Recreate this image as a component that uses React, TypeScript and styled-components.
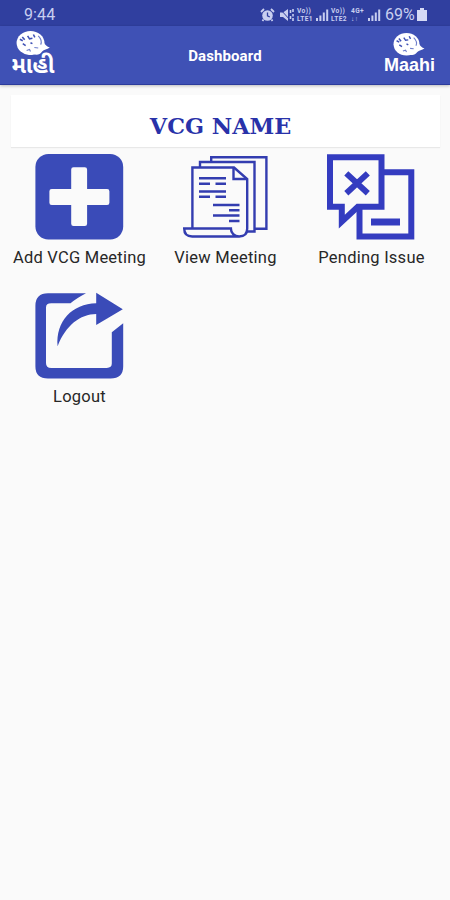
import React from 'react';
import styled, { createGlobalStyle } from 'styled-components';

const GlobalStyle = createGlobalStyle`
  * { box-sizing: border-box; }
  html, body { margin: 0; background: #fafafa; }
  body { font-family: Roboto, sans-serif; }
`;

const Screen = styled.div`
  display: flex;
  flex-direction: column;
  width: 450px;
  height: 900px;
  overflow: hidden;
  background: #fafafa;
`;

const StatusBar = styled.div`
  display: flex;
  justify-content: space-between;
  align-items: center;
  height: 26px;
  padding: 3px 23px 0 24px;
  background: #303f9f;
  color: #c9cff0;
`;

const Clock = styled.span`
  font-size: 16px;
  line-height: 22px;
  letter-spacing: 0.1px;
`;

const StatusIcons = styled.div`
  display: flex;
  align-items: center;
  height: 22px;
`;

const Battery = styled.span`
  width: 31px;
  margin: 0 1px 0 4px;
  font-size: 16px;
  line-height: 22px;
`;

const NetworkLabel = styled.span<{ $width: number }>`
  display: flex;
  flex-direction: column;
  width: ${(p) => p.$width}px;
  margin-left: 2px;
  font: bold 6.6px/8px Roboto, sans-serif;
  letter-spacing: 0.4px;
  white-space: nowrap;
`;

const AppBar = styled.header`
  display: grid;
  grid-template-columns: 66px 1fr 66px;
  flex: none;
  height: 59px;
  background: #3f51b5;
  border-bottom: 1px solid #2d3c9c;
  box-shadow: 0 1px 3px rgba(0, 0, 0, 0.25);
  color: #fff;
`;

const Title = styled.h1`
  margin: 0;
  padding-top: 1px;
  font-size: 15px;
  font-weight: 700;
  line-height: 58px;
  letter-spacing: 0.1px;
  text-align: center;
`;

const Brand = styled.div<{ $top: number; $shift: number }>`
  display: flex;
  flex-direction: column;
  align-items: center;
  padding-top: ${(p) => p.$top}px;
  margin-left: ${(p) => p.$shift}px;
`;

const BrandName = styled.span<{ $size: number; $pull: number }>`
  margin-top: ${(p) => p.$pull}px;
  font: bold ${(p) => p.$size}px/20px 'Liberation Sans', 'Noto Sans Gujarati', 'Noto Sans', sans-serif;
  white-space: nowrap;
`;

const NameCard = styled.div`
  flex: none;
  height: 52px;
  margin: 10px 10px 0 11px;
  padding-top: 16px;
  background: #fff;
  box-shadow: 0 1px 1px rgba(0, 0, 0, 0.07);
  text-align: center;
`;

const CardName = styled.div`
  padding-right: 14px;
  color: #2932a9;
  font: bold 22px/30px 'DejaVu Serif', serif;
  white-space: nowrap;
  transform: translateX(0.5%) scaleX(1.015);
`;

const Menu = styled.main`
  display: grid;
  grid-template-columns: repeat(3, 146px);
  grid-auto-rows: 139px;
  padding: 6px 6px 0;
`;

const Tile = styled.div`
  display: flex;
  flex-direction: column;
  align-items: center;
`;

const TileLabel = styled.span`
  margin-top: 6px;
  padding-left: 1px;
  color: #272727;
  font-size: 16.5px;
  line-height: 22px;
  letter-spacing: 0.24px;
  white-space: nowrap;
`;

const BLUE = '#3a4bb8';

const Emblem = ({ size }: { size: number }) => (
  <svg width={size * 1.2} height={size * 0.84} viewBox="0 0 36 25">
    <ellipse cx="15" cy="12.4" rx="14.4" ry="12.4" fill="#fff" />
    <path d="M23 14c2 2 5 1 6-2 1 2 3 4 6 5-3 2-6 2-8 4-2 3-5 4-8 3l-6-2z" fill="#fff" />
    <path d="M4 8.5l3 1.5M6.5 6l2.5 3M7 13l3 2M12 5l2 3 3-.5M18 3.5l1.5 3M15 12l2 1" fill="none" stroke="#3f51b5" strokeWidth="1.6" />
    <path d="M23 5c3 3 4 6 2.5 9M11 20l3-1 1 2M19 17l4 .5" fill="none" stroke="#6f7fcb" strokeWidth="1.2" />
  </svg>
);

const Signal = () => (
  <svg width="14" height="14" viewBox="0 0 14 14" fill="#c9cff0">
    <path d="M1 10h2v3H1zM4.4 7.5h2V13h-2zM7.8 4.5h2V13h-2zM11.2 1.5h2V13h-2z" />
  </svg>
);

const AlarmIcon = () => (
  <svg width="15" height="14" viewBox="0 0 15 14">
    <circle cx="7.5" cy="7.5" r="5.3" fill="#c9cff0" />
    <path d="M1 4l3-3M14 4l-3-3M3.5 11.5L2.5 13M11.5 11.5l1 1.5" stroke="#c9cff0" strokeWidth="1.8" />
    <path d="M7.5 4.5v3.3l2.3 1.2" fill="none" stroke="#303f9f" strokeWidth="1.3" />
  </svg>
);

const MuteIcon = () => (
  <svg width="16" height="14" viewBox="0 0 16 14">
    <path d="M1 4.5h3L9 1v12L4 9H1z" fill="#c9cff0" />
    <path d="M1 1l11 12" stroke="#303f9f" strokeWidth="1" />
    <path d="M11.5 2v3M11.5 8v3M14 1v3M14 6v2.5M14 10v3" stroke="#c9cff0" strokeWidth="1.6" />
  </svg>
);

const BatteryIcon = () => (
  <svg width="10" height="13" viewBox="0 0 10 13" fill="#d5daf5">
    <path d="M3 0h4v2h3v11H0V2h3z" />
  </svg>
);

const AddIcon = () => (
  <svg width="100" height="88" viewBox="29 153 100 88">
    <rect x="35.4" y="154" width="87.8" height="85.5" rx="13" fill={BLUE} />
    <path d="M73.5 167.3h11.3a2.3 2.3 0 0 1 2.3 2.3V189h20a2.3 2.3 0 0 1 2.3 2.3v11.4a2.3 2.3 0 0 1-2.3 2.3h-20v18.7a2.3 2.3 0 0 1-2.3 2.3H73.5a2.3 2.3 0 0 1-2.3-2.3V205H51.7a2.3 2.3 0 0 1-2.3-2.3v-11.4a2.3 2.3 0 0 1 2.3-2.3h19.5v-19.4a2.3 2.3 0 0 1 2.3-2.3z" fill="#fafafa" />
  </svg>
);

const PapersIcon = () => (
  <svg width="100" height="88" viewBox="175 153 100 88" fill="none" stroke="#333db0" strokeWidth="2.4">
    <path d="M211.2 162v-4.8h55.2v71.5h-12" />
    <path d="M200 167.5V162h54.5v69.5h-8" />
    <path d="M192.4 228.5v-61H234l13.2 11.5v49.5c0 5-3 8-8 8s-8.3-3.5-8.3-8h-46.7c0 5 3 8 8 8h47" />
    <path d="M233.5 168v11h13.2" />
    <path d="M199 178.2h27M199 183.7h11M215.5 183.7H226M199 191.5h27M199 196.7h11M215.5 196.7H226M213 205h26.5M229 210.2h10.5M213 215.5h26.5M229 221h10.5" />
  </svg>
);

const IssueIcon = () => (
  <svg width="100" height="88" viewBox="321 153 100 88" fill="none" stroke="#343cc0" strokeWidth="6">
    <path d="M384 172.3h27.3v64.2H359.5v-27.5" />
    <path d="M330 157.3h51.5v49.5H357.8l-16 14.8v-14.8H330z" />
    <path d="M346.3 173.4l21.5 19.8M367.8 173.4l-21.5 19.8" />
    <path d="M371 222h29" strokeWidth="7" />
  </svg>
);

const LogoutIcon = () => (
  <svg width="100" height="88" viewBox="29 292.5 100 88" fill={BLUE}>
    <path d="M86 293.7H48q-12.6 0-12.6 12.5V367q0 11.9 12.6 11.9h62.5q12.7 0 12.7-11.9v-43.2l-11.4 9V364q0 4.4-5 4.4H51.2q-5.2 0-5.2-5v-55.5q0-4.2 5.2-4.2H70.5Q76 299 86 293.7z" />
    <path d="M96.2 293.2l26.6 16.6-26.6 15.6v-10.8c-16 .2-30.5 11.3-38.6 32.2-2-25 14.6-42.7 38.6-43.1z" />
  </svg>
);

export default function App() {
  return (
    <>
      <GlobalStyle />
      <Screen>
        <StatusBar>
          <Clock>9:44</Clock>
          <StatusIcons>
            <AlarmIcon />
            <svg width="4" height="1" />
            <MuteIcon />
            <NetworkLabel $width={18}><span>Vo))</span><span>LTE1</span></NetworkLabel>
            <Signal />
            <NetworkLabel $width={18}><span>Vo))</span><span>LTE2</span></NetworkLabel>
            <NetworkLabel $width={16}><span>4G+</span><span>↓↑</span></NetworkLabel>
            <Signal />
            <Battery>69%</Battery>
            <BatteryIcon />
          </StatusIcons>
        </StatusBar>
        <AppBar>
          <Brand $top={5} $shift={0}>
            <Emblem size={29} />
            <BrandName $size={23} $pull={0}>માહી</BrandName>
          </Brand>
          <Title>Dashboard</Title>
          <Brand $top={7} $shift={-15}>
            <Emblem size={27} />
            <BrandName $size={18} $pull={-1}>Maahi</BrandName>
          </Brand>
        </AppBar>
        <NameCard><CardName>VCG NAME</CardName></NameCard>
        <Menu>
          <Tile><AddIcon /><TileLabel>Add VCG Meeting</TileLabel></Tile>
          <Tile><PapersIcon /><TileLabel>View Meeting</TileLabel></Tile>
          <Tile><IssueIcon /><TileLabel>Pending Issue</TileLabel></Tile>
          <Tile><LogoutIcon /><TileLabel>Logout</TileLabel></Tile>
        </Menu>
      </Screen>
    </>
  );
}
